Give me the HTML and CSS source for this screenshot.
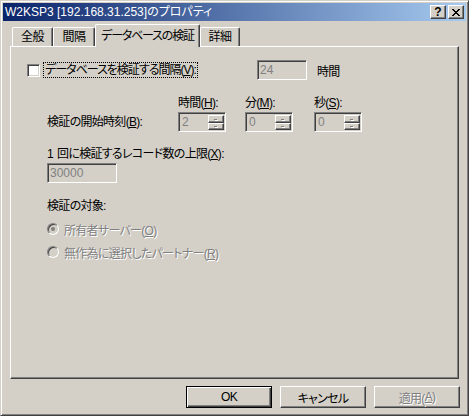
FILE: index.html
```html
<!DOCTYPE html>
<html lang="ja">
<head>
<meta charset="utf-8">
<link rel="stylesheet" href="styles.css">
</head>
<body>
<div class="window">
  <div class="titlebar">
    <span class="title">W2KSP3 [192.168.31.253]のプロパティ</span>
    <div class="tbtns">
      <span class="tbtn">?</span>
      <span class="tbtn close"><svg width="8" height="7" viewBox="0 0 8 7"><path d="M0 0h2v1h1v1h2V1h1V0h2v1H7v1H6v1H5v1h1v1h1v1h1v1H6V6H5V5H3v1H2v1H0V6h1V5h1V4h1V3H2V2H1V1H0z" fill="#000"/></svg></span>
    </div>
  </div>
  <div class="tabs">
    <div class="tab t-general">全般</div>
    <div class="tab t-interval">間隔</div>
    <div class="tab active">データベースの検証</div>
    <div class="tab t-detail">詳細</div>
  </div>
  <div class="panel">
    <div class="row-interval">
      <label class="check-wrap">
        <span class="checkbox"></span>
        <span class="focus">データベースを検証する間隔(<u>V</u>):</span>
      </label>
      <span class="input dis w50">24</span>
      <span class="unit">時間</span>
    </div>

    <div class="time-grid">
      <span></span>
      <span class="lbl">時間(<u>H</u>):</span>
      <span class="lbl">分(<u>M</u>):</span>
      <span class="lbl">秒(<u>S</u>):</span>
      <span class="lbl start">検証の開始時刻(<u>B</u>):</span>
      <span class="spin"><span class="spin-text">2</span><span class="spin-btns"><span class="sb up"></span><span class="sb down"></span></span></span>
      <span class="spin"><span class="spin-text">0</span><span class="spin-btns"><span class="sb up"></span><span class="sb down"></span></span></span>
      <span class="spin"><span class="spin-text">0</span><span class="spin-btns"><span class="sb up"></span><span class="sb down"></span></span></span>
    </div>

    <div class="lbl limit-lbl"><span class="num">1 </span>回に検証するレコード数の上限(<u>X</u>):</div>
    <span class="input dis w70">30000</span>

    <div class="lbl target-lbl">検証の対象:</div>
    <div class="radio-row"><span class="radio checked"></span><span class="dis-text">所有者サーバー(<u>O</u>)</span></div>
    <div class="radio-row"><span class="radio"></span><span class="dis-text">無作為に選択したパートナー(<u>R</u>)</span></div>
  </div>
  <div class="buttons">
    <span class="btn default">OK</span>
    <span class="btn">キャンセル</span>
    <span class="btn dis-text">適用(<u>A</u>)</span>
  </div>
</div>
</body>
</html>
```

FILE: styles.css
```css
* { box-sizing: border-box; }
html, body { margin: 0; padding: 0; background: #D4D0C8; }
body {
  font-family: "Liberation Sans", "Noto Sans CJK JP", sans-serif;
  font-size: 12px;
  font-feature-settings: "palt";
  letter-spacing: -0.7px;
  color: #000;
}
u { text-decoration: underline; text-underline-offset: 1px; }

.window {
  width: 469px;
  height: 416px;
  border: 1px solid;
  border-color: #D4D0C8 #404040 #404040 #D4D0C8;
  box-shadow: inset 1px 1px 0 #fff, inset -1px -1px 0 #808080;
  padding: 2px;
  display: flex;
  flex-direction: column;
}

.titlebar {
  height: 18px;
  background: linear-gradient(to right, #0A246A, #A6CAF0);
  display: flex;
  align-items: center;
  justify-content: space-between;
  padding: 0 2px 0 2px;
  color: #fff;
}
.title { font-size: 12px; line-height: 18px; white-space: nowrap; letter-spacing: 0; }
.tbtns { display: flex; gap: 2px; }
.tbtn {
  width: 16px; height: 14px;
  background: #D4D0C8;
  border: 1px solid;
  border-color: #fff #404040 #404040 #fff;
  box-shadow: inset -1px -1px 0 #808080;
  color: #000;
  font-family: "Liberation Sans", sans-serif;
  font-weight: bold;
  font-size: 12px;
  line-height: 12px;
  letter-spacing: 0;
  display: flex; align-items: center; justify-content: center;
}
.tbtn.close svg { display: block; }

.tabs {
  display: flex;
  align-items: flex-end;
  height: 25px;
  padding-left: 9px;
}
.tab {
  height: 19px;
  line-height: 18px;
  text-align: center;
  background: #D4D0C8;
  border: 1px solid #fff;
  border-bottom: none;
  border-right: 1px solid #404040;
  box-shadow: inset -1px 0 0 #808080;
  border-radius: 2px 2px 0 0;
  position: relative;
  font-size: 12px;
  letter-spacing: -0.4px;
  white-space: nowrap;
}
.t-general { width: 41px; }
.t-interval { width: 42px; }
.t-detail { width: 40px; }
.tab.active {
  width: 105px;
  height: 23px;
  margin-bottom: -1px;
  z-index: 2;
  line-height: 22px;
  letter-spacing: -1.2px;
}

.panel {
  margin: 0 7px 0 7px;
  height: 333px;
  border: 1px solid;
  border-color: #fff #404040 #404040 #fff;
  box-shadow: inset -1px -1px 0 #808080;
  padding: 13px 0 0 16px;
  display: flex;
  flex-direction: column;
  align-items: flex-start;
}

.row-interval { display: flex; align-items: center; height: 20px; }
.check-wrap { display: flex; align-items: center; width: 230px; }
.checkbox {
  width: 13px; height: 13px;
  background: #fff;
  border: 1px solid;
  border-color: #808080 #fff #fff #808080;
  box-shadow: inset 1px 1px 0 #404040, inset -1px -1px 0 #D4D0C8;
  margin-right: 4px;
}
.focus { outline: 1px dotted #000; padding: 0 1px; line-height: 14px; white-space: nowrap; letter-spacing: -1px; }
.unit { margin-left: 10px; }

.input {
  height: 20px;
  border: 1px solid;
  border-color: #808080 #fff #fff #808080;
  box-shadow: inset 1px 1px 0 #404040, inset -1px -1px 0 #D4D0C8;
  padding: 0 2px;
  line-height: 18px;
  font-size: 12px;
  letter-spacing: 0;
  display: block;
}
.input.dis { color: #808080; background: #D4D0C8; }
.w50 { width: 50px; }
.w70 { width: 70px; }

.time-grid {
  display: grid;
  grid-template-columns: 131px 67px 69px 48px;
  grid-template-rows: 16px 20px;
  row-gap: 2px;
  margin-top: 14px;
  margin-left: 20px;
  align-items: end;
}
.time-grid .lbl { white-space: nowrap; line-height: 14px; }
.time-grid .start { align-self: center; }

.spin {
  width: 48px; height: 20px;
  border: 1px solid;
  border-color: #808080 #fff #fff #808080;
  box-shadow: inset 1px 1px 0 #404040;
  background: #D4D0C8;
  display: flex;
  padding: 2px 1px 1px 2px;
}
.spin-text { flex: 1; color: #808080; line-height: 15px; padding-left: 1px; }
.spin-btns { width: 16px; display: flex; flex-direction: column; }
.sb {
  flex: 1;
  background: #D4D0C8;
  border: 1px solid;
  border-color: #fff #404040 #404040 #fff;
  box-shadow: inset -1px -1px 0 #808080;
  position: relative;
}
.sb::after {
  content: "";
  position: absolute;
  left: 5px;
  top: 2px;
  width: 3px; height: 1px;
  background: #808080;
  box-shadow: 1px 1px 0 #fff;
}
.sb.up::after { top: 3px; }
.sb.down::after { top: 2px; }

.limit-lbl { margin: 15px 0 2px 20px; white-space: nowrap; line-height: 14px; }
.num { letter-spacing: 0; }
.panel > .input.w70 { margin-left: 20px; }
.target-lbl { margin: 16px 0 0 20px; line-height: 14px; color: #000; }
.dis-text { color: #808080; text-shadow: 1px 1px 0 #fff; }

.radio-row { display: flex; align-items: center; margin: 9px 0 0 20px; height: 14px; white-space: nowrap; }
.radio-row + .radio-row { margin-top: 9px; }
.radio {
  width: 12px; height: 12px;
  border-radius: 50%;
  background: #D4D0C8;
  border: 1px solid;
  border-color: #808080 #fff #fff #808080;
  box-shadow: inset 1px 1px 0 #404040;
  margin-right: 5px;
  position: relative;
}
.radio.checked::after {
  content: "";
  position: absolute;
  left: 3px; top: 3px;
  width: 4px; height: 4px;
  border-radius: 50%;
  background: #808080;
}

.buttons {
  display: flex;
  justify-content: flex-end;
  gap: 8px;
  margin-top: 7px;
  padding-right: 6px;
}
.btn {
  width: 86px; height: 22px;
  border: 1px solid;
  border-color: #fff #404040 #404040 #fff;
  box-shadow: inset -1px -1px 0 #808080;
  background: #D4D0C8;
  display: flex; align-items: center; justify-content: center;
  font-size: 12px;
}
.btn.default {
  border: 1px solid #000;
  box-shadow: inset 1px 1px 0 #fff, inset -1px -1px 0 #404040, inset -2px -2px 0 #808080;
}
```
